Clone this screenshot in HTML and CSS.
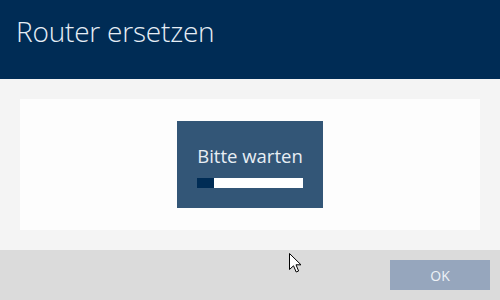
FILE: index.html
```html
<!DOCTYPE html>
<html lang="de">
<head>
<meta charset="utf-8">
<link rel="stylesheet" href="styles.css">
</head>
<body>
<div class="dialog">
  <header class="head"><h1 class="title">Router ersetzen</h1></header>
  <main class="content">
    <div class="panel">
      <div class="wait">
        <div class="wait-text">Bitte warten</div>
        <div class="bar"><div class="bar-fill" style="width:16%"></div></div>
      </div>
    </div>
  </main>
  <footer class="foot">
    <button class="ok">OK</button>
  </footer>
</div>
<svg class="cursor" width="13" height="20" viewBox="0 0 13 20">
  <path d="M0.5 0.5 L0.5 16.5 L4.5 12.8 L7.2 19 L9.6 18 L7 11.8 L12 11.8 Z" fill="#fff" stroke="#000" stroke-width="1" stroke-linejoin="miter"/>
</svg>
</body>
</html>
```
FILE: styles.css
```css
html, body {
  margin: 0;
  padding: 0;
  width: 500px;
  height: 300px;
  overflow: hidden;
  font-family: "Open Sans", "Noto Sans", sans-serif;
}
.dialog {
  display: flex;
  flex-direction: column;
  width: 500px;
  height: 300px;
}
.head {
  height: 79px;
  background: #002c55;
  display: flex;
  align-items: flex-start;
  padding: 0 16px;
  box-sizing: border-box;
}
.title {
  margin: 13px 0 0 0;
  font-weight: 300;
  font-size: 28px;
  letter-spacing: -0.2px;
  color: #e6eef6;
  line-height: 36px;
}
.content {
  height: 171px;
  background: #f4f4f4;
  padding: 20px 20px 20px 20px;
  box-sizing: border-box;
}
.panel {
  height: 131px;
  background: #fdfdfd;
  display: flex;
  justify-content: center;
  padding-top: 22px;
  box-sizing: border-box;
}
.wait {
  width: 146px;
  height: 87px;
  background: #335677;
  display: flex;
  flex-direction: column;
  align-items: center;
  padding-top: 24px;
  box-sizing: border-box;
}
.wait-text {
  color: #e8eef4;
  font-size: 18.5px;
  line-height: 22px;
  height: 22px;
}
.bar {
  margin-top: 11px;
  width: 106px;
  height: 10px;
  background: #ffffff;
}
.bar-fill {
  height: 100%;
  background: #002c55;
}
.foot {
  flex: 1;
  background: #dbdbdb;
  display: flex;
  justify-content: flex-end;
  align-items: flex-start;
  padding: 10px 10px 0 0;
}
.ok {
  width: 100px;
  height: 30px;
  border: none;
  background: #96a6bd;
  color: #eef2f7;
  font-family: "Open Sans", "Noto Sans", sans-serif;
  font-size: 14px;
  padding: 0;
}
.cursor {
  position: absolute;
  left: 289px;
  top: 253px;
}
```
